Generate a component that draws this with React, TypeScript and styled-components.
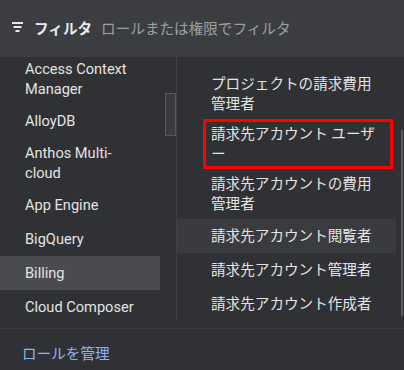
import { useLayoutEffect, useRef } from "react"
import styled, { createGlobalStyle } from "styled-components"

const GlobalStyle = createGlobalStyle`
  html, body {
    margin: 0;
    padding: 0;
    background: #303134;
  }
  * {
    box-sizing: border-box;
  }
`

const Page = styled.div`
  width: 404px;
  height: 370px;
  display: flex;
  flex-direction: column;
  background: #303134;
  color: #e3e3e3;
  font-family: Roboto, "Noto Sans CJK JP", sans-serif;
  font-size: 14.6px;
  overflow: hidden;
`

const FilterBar = styled.div`
  height: 57px;
  flex-shrink: 0;
  display: flex;
  align-items: center;
  padding: 0 0 3px 11px;
  background: #3c3d41;
`

const FilterLabel = styled.span`
  margin-left: 9px;
  font-weight: 700;
  color: #e8eaed;
`

const FilterPlaceholder = styled.span`
  margin-left: 9px;
  color: #9aa0a6;
`

const Columns = styled.div`
  display: flex;
  height: 262px;
  flex-shrink: 0;
`

const CategoryColumn = styled.div`
  position: relative;
  width: 177px;
  border-right: 1px solid #404145;
`

const CategoryList = styled.div`
  width: 160px;
  height: 100%;
  overflow: hidden;
`

const RoleColumn = styled.div`
  position: relative;
  flex: 1;
  overflow: hidden;
`

const RoleList = styled.div`
  width: 219px;
  padding-top: 12px;
`

const Item = styled.div<{ $indent: number; $bg?: string; $marked?: boolean }>`
  position: relative;
  display: flex;
  align-items: center;
  min-height: 34px;
  padding: 5px 14px 5px ${(p) => p.$indent}px;
  line-height: 20px;
  background: ${(p) => p.$bg ?? "transparent"};

  ${(p) =>
    p.$marked &&
    `
    &::after {
      content: "";
      position: absolute;
      top: 0;
      bottom: 0;
      left: 26px;
      right: 3px;
      border: 3px solid #ff0000;
    }
  `}
`

const ScrollThumb = styled.div`
  position: absolute;
  top: 36px;
  right: 0;
  width: 11px;
  height: 43px;
  background: #3a3b3f;
  border: 1px solid #55575b;
`

const ThinThumb = styled.div`
  position: absolute;
  top: 73px;
  right: 1px;
  width: 2px;
  height: 186px;
  background: #5a5c60;
`

const Footer = styled.div`
  margin-top: 9px;
  flex: 1;
  border-top: 1px solid #3c3d41;
  padding: 14px 0 0 22px;
  line-height: 22px;
  color: #8ab4f8;
`

const FilterIcon = () => (
  <svg width="14" height="14" viewBox="0 0 14 14">
    <g stroke="#e8eaed" strokeWidth="2">
      <line x1="1" y1="3" x2="12" y2="3" />
      <line x1="2.5" y1="7" x2="10.5" y2="7" />
      <line x1="4.5" y1="11" x2="8.5" y2="11" />
    </g>
  </svg>
)

const categories = [
  "Access Approval",
  "Access Context Manager",
  "AlloyDB",
  "Anthos Multi-cloud",
  "App Engine",
  "BigQuery",
  "Billing",
  "Cloud Composer",
  "Cloud Build",
  "Cloud Functions",
]

const roles = [
  "プロジェクトの請求費用管理者",
  "請求先アカウント ユーザー",
  "請求先アカウントの費用管理者",
  "請求先アカウント閲覧者",
  "請求先アカウント管理者",
  "請求先アカウント作成者",
]

export default function App() {
  const listRef = useRef<HTMLDivElement>(null)

  useLayoutEffect(() => {
    if (listRef.current) listRef.current.scrollTop = 37
  }, [])

  return (
    <>
      <GlobalStyle />
      <Page>
        <FilterBar>
          <FilterIcon />
          <FilterLabel>フィルタ</FilterLabel>
          <FilterPlaceholder>ロールまたは権限でフィルタ</FilterPlaceholder>
        </FilterBar>
        <Columns>
          <CategoryColumn>
            <CategoryList ref={listRef}>
              {categories.map((name) => (
                <Item key={name} $indent={25} $bg={name === "Billing" ? "#4a4b4f" : undefined}>
                  {name}
                </Item>
              ))}
            </CategoryList>
            <ScrollThumb />
          </CategoryColumn>
          <RoleColumn>
            <RoleList>
              {roles.map((role, index) => (
                <Item
                  key={role}
                  $indent={34}
                  $bg={index === 3 ? "#3a3b3f" : undefined}
                  $marked={index === 1}
                >
                  {role}
                </Item>
              ))}
            </RoleList>
            <ThinThumb />
          </RoleColumn>
        </Columns>
        <Footer>ロールを管理</Footer>
      </Page>
    </>
  )
}
